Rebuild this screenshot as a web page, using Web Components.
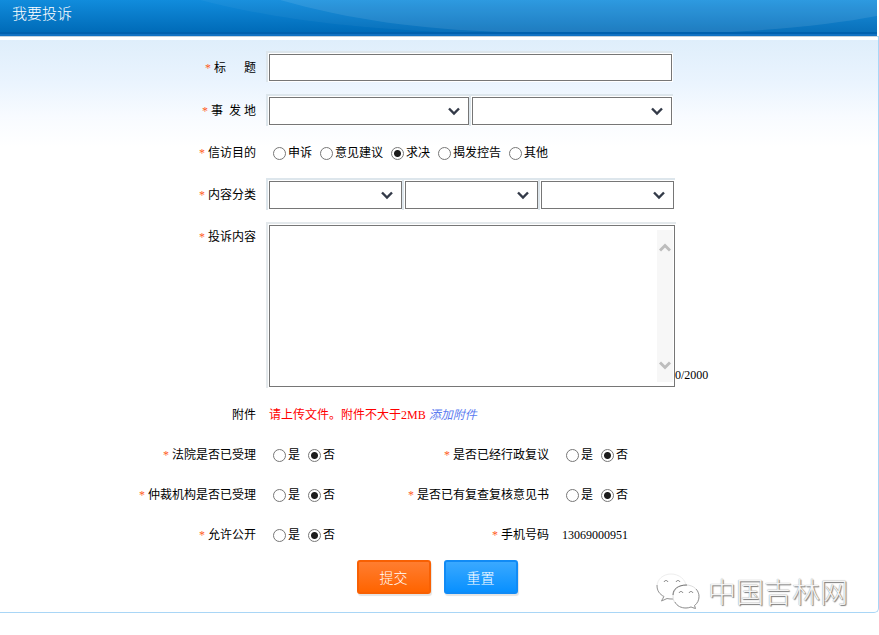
<!DOCTYPE html>
<html lang="zh-CN">
<head>
<meta charset="utf-8">
<title>我要投诉</title>
<style>
  body {
    margin: 0;
    background: #fff;
    color: #000;
    font: 12px/16px "Liberation Serif", "Noto Sans CJK SC", serif;
  }
</style>
</head>
<body>
<complaint-form></complaint-form>

<script>
const panelTemplate = document.createElement('template');
panelTemplate.innerHTML = /*html*/`
  <style>
    :host {
      display: block;
      position: relative;
    }
    header {
      position: relative;
      height: 36px;
      box-sizing: border-box;
      margin-right: 2px;
      padding: 3px 12px;
      background: linear-gradient(#118cdc, #006bb8 32px, #0061ae 32px, #0061ae 34px, #1272c2 34px);
      color: #fff;
    }
    header svg {
      position: absolute;
      inset: 0;
      width: 100%;
      height: 32px;
    }
    h1 {
      position: relative;
      margin: 0;
      font: 15px/20px "Noto Sans CJK SC", sans-serif;
      font-weight: 300;
    }
    .body {
      padding-top: 14px;
      border: 1px solid #a9d6f6;
      border-width: 1px 1px 1px 0;
      border-top-color: #c3d3df;
      border-bottom-right-radius: 5px;
      background: linear-gradient(#fff 3px, #dfeefb 3px, #eaf4fe 45px, #f8fbff 80px, #fff 110px);
    }
  </style>
  <header>
    <svg viewBox="0 0 877 32" preserveAspectRatio="none" aria-hidden="true">
      <g fill="#fff">
        <path d="M200 0C270 18 340 27 440 32H877V0Z" fill-opacity="0.04"/>
        <path d="M280 0C350 20 420 29 500 32H731C790 29 840 23 877 16V0Z" fill-opacity="0.09"/>
      </g>
    </svg>
    <h1><slot name="title"></slot></h1>
  </header>
  <div class="body"><slot></slot></div>`;

class FormPanel extends HTMLElement {
  constructor() {
    super();
    this.attachShadow({ mode: 'open' });
    this.shadowRoot.appendChild(panelTemplate.content.cloneNode(true));
  }
}

const rowTemplate = document.createElement('template');
rowTemplate.innerHTML = /*html*/`
  <style>
    :host {
      display: grid;
      grid-template-columns: var(--label-width, 256px) auto;
      column-gap: 13px;
      align-items: center;
      justify-content: start;
    }
    .label {
      text-align: right;
      white-space: nowrap;
    }
    :host([required]) .label::before {
      content: "*\\00a0";
      color: #ff5a1e;
    }
    .control {
      display: flex;
      align-items: center;
      gap: 3px;
    }
    :host([top]) {
      align-items: start;
    }
    :host([top]) .label {
      padding-top: 4px;
    }
  </style>
  <div class="label"><slot name="label"></slot></div>
  <div class="control"><slot></slot></div>`;

class FormRow extends HTMLElement {
  constructor() {
    super();
    this.attachShadow({ mode: 'open' });
    this.shadowRoot.appendChild(rowTemplate.content.cloneNode(true));
  }
}

const choiceTemplate = document.createElement('template');
choiceTemplate.innerHTML = /*html*/`
  <style>
    :host {
      display: flex;
      gap: 8px;
      margin-left: 4px;
    }
    label {
      display: flex;
      align-items: center;
      gap: 2px;
      white-space: nowrap;
    }
    input {
      appearance: none;
      box-sizing: border-box;
      width: 13px;
      height: 13px;
      margin: 0;
      border: 1px solid #777;
      border-radius: 50%;
      background: #fff;
    }
    input:checked {
      background: radial-gradient(circle, #1c1c1c 3px, #fff 4px);
    }
  </style>`;

class RadioChoice extends HTMLElement {
  constructor() {
    super();
    this.attachShadow({ mode: 'open' });
  }

  connectedCallback() {
    this.setAttribute('role', 'radiogroup');
    this.shadowRoot.appendChild(choiceTemplate.content.cloneNode(true));
    const selected = this.getAttribute('value');
    this.getAttribute('options').split(',').forEach(text => {
      this.shadowRoot.appendChild(this._getOption(text, text === selected));
    });
  }

  _getOption(text, checked) {
    const label = document.createElement('label');
    const input = document.createElement('input');
    input.type = 'radio';
    input.name = this.getAttribute('name');
    input.value = text;
    input.checked = checked;
    label.append(input, text);
    return label;
  }
}

const textTemplate = document.createElement('template');
textTemplate.innerHTML = /*html*/`
  <style>
    :host {
      display: flex;
      align-items: flex-end;
    }
    .box {
      display: flex;
      box-sizing: border-box;
      width: 406px;
      height: 162px;
      border: 1px solid #767676;
      background: #fff;
      box-shadow: 0 0 0 1px #fff, -1px -1px 0 2px #e4e9ec;
    }
    textarea {
      flex: 1;
      border: 0;
      padding: 2px;
      outline: 0;
      resize: none;
      overflow: hidden;
      background: none;
      font: inherit;
    }
    .bar {
      display: flex;
      flex-direction: column;
      justify-content: space-between;
      align-items: center;
      width: 16px;
      margin: 4px 1px 4px 0;
      padding: 13px 0 12px;
      box-sizing: border-box;
      background: #f7f7f7;
    }
    .bar svg {
      width: 12px;
      height: 9px;
      fill: none;
      stroke: #bdbdbd;
      stroke-width: 3;
    }
    output {
      padding-bottom: 4px;
    }
  </style>
  <div class="box">
    <textarea aria-label="投诉内容" maxlength="2000"></textarea>
    <div class="bar" aria-hidden="true">
      <svg viewBox="0 0 12 9"><path d="M1 7.500L6 2.500L11 7.500"/></svg>
      <svg viewBox="0 0 12 9"><path d="M1 1.500L6 6.500L11 1.500"/></svg>
    </div>
  </div>
  <output>0/2000</output>`;

class CountedText extends HTMLElement {
  constructor() {
    super();
    this.attachShadow({ mode: 'open', delegatesFocus: true });
    this.shadowRoot.appendChild(textTemplate.content.cloneNode(true));
  }

  connectedCallback() {
    const area = this.shadowRoot.querySelector('textarea');
    area.addEventListener('input', () => {
      this.shadowRoot.querySelector('output').textContent = `${area.value.length}/2000`;
    });
  }
}

const markTemplate = document.createElement('template');
markTemplate.innerHTML = /*html*/`
  <style>
    :host {
      position: absolute;
      right: 31px;
      bottom: 4px;
      display: flex;
      align-items: center;
      gap: 8px;
      color: #f4f4f4;
      font: 28px/36px "Noto Sans CJK SC", sans-serif;
      font-weight: 300;
      text-shadow: 1px 1px 1px #777, 0 0 1px #888;
      pointer-events: none;
    }
    svg {
      width: 44px;
      height: 36px;
    }
  </style>
  <svg viewBox="0 0 44 36" aria-hidden="true">
    <path d="M15 1C7 1 1 6.500 1 13.500C1 18 3.500 21 7 23.500L5.500 28L11 25.500C13 26 15 26 17 26C25 25 30 20 30 13.500C30 6.500 23 1 15 1Z" fill="#fff" stroke="#eee"/>
    <path d="M1 12C1 18 3.500 21 8 23.500L5.500 28L11 25.500C13 26 15 26 17 26" fill="none" stroke="#999"/>
    <path d="M30 12C22.500 12 17 17 17 23.500C17 30 22.500 35 30 35C32 35 33.500 34.500 35 34L39.500 36L38.500 32.500C41.500 30.500 43 27 43 23.500C43 17 37.500 12 30 12Z" fill="#fff" stroke="#ddd"/>
    <path d="M19 29C21 33 25 35 30 35C32 35 33.500 34.500 35 34L39.500 35.500L38.500 32.500C41.500 30.500 43 27 43 23.500C43 21 42 18 40 16" fill="none" stroke="#999"/>
    <path d="M17 22C17 16 22 12 31 12M8 9C9 7 11 7 12 9M20 9C21 7 23 7 24 9M23 20C24 18 26 18 27 20M33 20C34 18 36 18 37 20" fill="none" stroke="#777"/>
  </svg>
  <span><slot></slot></span>`;

class WaterMark extends HTMLElement {
  constructor() {
    super();
    this.attachShadow({ mode: 'open' });
    this.shadowRoot.appendChild(markTemplate.content.cloneNode(true));
  }
}

const formTemplate = document.createElement('template');
formTemplate.innerHTML = /*html*/`
  <style>
    :host {
      display: block;
    }
    form {
      display: flex;
      flex-direction: column;
      gap: 16px;
      padding: 3px 0 18px;
    }
    input, select {
      box-sizing: border-box;
      height: 28px;
      margin: 0;
      border: 1px solid #767676;
      border-radius: 0;
      background: #fff;
      font: inherit;
      box-shadow: 0 0 0 1px #fff, -1px -1px 0 2px #dde6ec;
    }
    input {
      width: 403px;
      height: 27px;
    }
    select {
      appearance: none;
      width: 200px;
      background: #fff url("data:image/svg+xml,%3Csvg xmlns='http://www.w3.org/2000/svg' width='12' height='9'%3E%3Cpath d='M1 1.500L6 6.500L11 1.500' fill='none' stroke='%23333a48' stroke-width='2.400'/%3E%3C/svg%3E") no-repeat right 8px center;
    }
    .third {
      width: 133px;
    }
    .line {
      min-height: 24px;
    }
    .pairs {
      display: grid;
      grid-template-columns: 399px auto;
      justify-content: start;
      row-gap: 24px;
      padding: 4px 0 1px;
    }
    .pairs form-row:nth-child(even) {
      --label-width: 150px;
    }
    .hint {
      color: #f00;
    }
    a {
      color: #5b7bf0;
      font-style: italic;
      text-decoration: none;
    }
    .actions {
      display: flex;
      justify-content: center;
      gap: 13px;
      padding-right: 4px;
    }
    button {
      width: 74px;
      height: 34px;
      padding: 0;
      border: 2px solid #f86003;
      border-radius: 3px;
      background: linear-gradient(#ff7d30, #ff6400);
      box-shadow: 1px 2px 1px #e4e4e4;
      color: #fff;
      font: 14px/20px "Noto Sans CJK SC", sans-serif;
      font-weight: 300;
    }
    button[type=reset] {
      border-color: #118bf5;
      background: linear-gradient(#3aa9ff, #0890ff);
    }
  </style>
  <form-panel>
    <span slot="title">我要投诉</span>
    <form>
      <form-row required>
        <label slot="label" for="subject">标&nbsp;&nbsp;&nbsp;&nbsp;&nbsp;&nbsp;题</label>
        <input id="subject" type="text">
      </form-row>
      <form-row required>
        <label slot="label" for="city">事&nbsp;&nbsp;发&nbsp;地</label>
        <select id="city"></select>
        <select aria-label="区县"></select>
      </form-row>
      <form-row required class="line">
        <span slot="label">信访目的</span>
        <radio-choice name="purpose" aria-label="信访目的" options="申诉,意见建议,求决,揭发控告,其他" value="求决"></radio-choice>
      </form-row>
      <form-row required>
        <label slot="label" for="category">内容分类</label>
        <select id="category" class="third"></select>
        <select class="third" aria-label="二级分类"></select>
        <select class="third" aria-label="三级分类"></select>
      </form-row>
      <form-row required top>
        <span slot="label">投诉内容</span>
        <counted-text></counted-text>
      </form-row>
      <form-row class="line">
        <span slot="label">附件</span>
        <span class="hint">请上传文件。附件不大于2MB</span>
        <a href="#">添加附件</a>
      </form-row>
      <div class="pairs">
        <form-row required>
          <span slot="label">法院是否已受理</span>
          <radio-choice name="court" aria-label="法院是否已受理" options="是,否" value="否"></radio-choice>
        </form-row>
        <form-row required>
          <span slot="label">是否已经行政复议</span>
          <radio-choice name="review" aria-label="是否已经行政复议" options="是,否" value="否"></radio-choice>
        </form-row>
        <form-row required>
          <span slot="label">仲裁机构是否已受理</span>
          <radio-choice name="arbitration" aria-label="仲裁机构是否已受理" options="是,否" value="否"></radio-choice>
        </form-row>
        <form-row required>
          <span slot="label">是否已有复查复核意见书</span>
          <radio-choice name="opinion" aria-label="是否已有复查复核意见书" options="是,否" value="否"></radio-choice>
        </form-row>
        <form-row required>
          <span slot="label">允许公开</span>
          <radio-choice name="public" aria-label="允许公开" options="是,否" value="否"></radio-choice>
        </form-row>
        <form-row required>
          <span slot="label">手机号码</span>
          <span>13069000951</span>
        </form-row>
      </div>
      <div class="actions">
        <button type="submit">提交</button>
        <button type="reset">重置</button>
      </div>
    </form>
    <water-mark>中国吉林网</water-mark>
  </form-panel>`;

class ComplaintForm extends HTMLElement {
  constructor() {
    super();
    this.attachShadow({ mode: 'open' });
    this.shadowRoot.appendChild(formTemplate.content.cloneNode(true));
  }
}

customElements.define('form-panel', FormPanel);
customElements.define('form-row', FormRow);
customElements.define('radio-choice', RadioChoice);
customElements.define('counted-text', CountedText);
customElements.define('water-mark', WaterMark);
customElements.define('complaint-form', ComplaintForm);
</script>
</body>
</html>
